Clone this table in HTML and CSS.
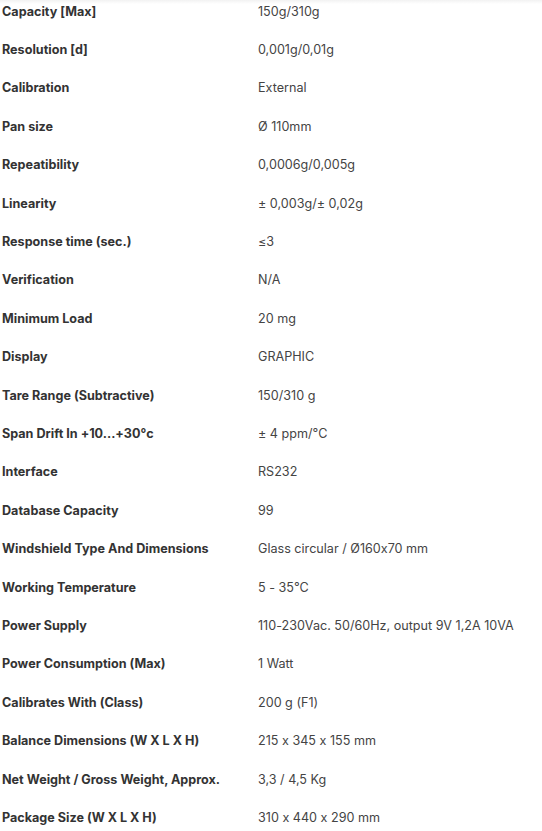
FILE: index.html
```html
<!DOCTYPE html>
<html>
<head>
<meta charset="utf-8">
<link rel="stylesheet" href="styles.css">
</head>
<body>
<div class="topfade"></div>
<table class="specs">
<tbody>
<tr><th>Capacity [Max]</th><td>150g/310g</td></tr>
<tr><th>Resolution [d]</th><td>0,001g/0,01g</td></tr>
<tr><th>Calibration</th><td>External</td></tr>
<tr><th>Pan size</th><td>Ø 110mm</td></tr>
<tr><th>Repeatibility</th><td>0,0006g/0,005g</td></tr>
<tr><th>Linearity</th><td>± 0,003g/± 0,02g</td></tr>
<tr><th>Response time (sec.)</th><td>≤3</td></tr>
<tr><th>Verification</th><td>N/A</td></tr>
<tr><th>Minimum Load</th><td>20 mg</td></tr>
<tr><th>Display</th><td>GRAPHIC</td></tr>
<tr><th>Tare Range (Subtractive)</th><td>150/310 g</td></tr>
<tr><th>Span Drift In +10...+30°c</th><td>± 4 ppm/°C</td></tr>
<tr><th>Interface</th><td>RS232</td></tr>
<tr><th>Database Capacity</th><td>99</td></tr>
<tr><th>Windshield Type And Dimensions</th><td>Glass circular / Ø160x70 mm</td></tr>
<tr><th>Working Temperature</th><td>5 - 35°C</td></tr>
<tr><th>Power Supply</th><td>110-230Vac. 50/60Hz, output 9V 1,2A 10VA</td></tr>
<tr><th>Power Consumption (Max)</th><td>1 Watt</td></tr>
<tr><th>Calibrates With (Class)</th><td>200 g (F1)</td></tr>
<tr><th>Balance Dimensions (W X L X H)</th><td>215 x 345 x 155 mm</td></tr>
<tr><th>Net Weight / Gross Weight, Approx.</th><td>3,3 / 4,5 Kg</td></tr>
<tr><th>Package Size (W X L X H)</th><td>310 x 440 x 290 mm</td></tr>
</tbody>
</table>
</body>
</html>
```
FILE: styles.css
```css
html, body {
  margin: 0;
  padding: 0;
  background: #ffffff;
}
body {
  font-family: Inter, "Open Sans", sans-serif;
  font-size: 12.6px;
  font-feature-settings: "calt" 0;
  overflow: hidden;
}
.topfade {
  position: absolute;
  top: 0;
  left: 0;
  right: 0;
  height: 4px;
  background: linear-gradient(#f2f2f2, rgba(255,255,255,0));
  pointer-events: none;
}
.specs {
  border-collapse: collapse;
  margin-top: -8px;
  width: 542px;
}
.specs th,
.specs td {
  height: 38.4px;
  padding: 0;
  vertical-align: middle;
  text-align: left;
  white-space: nowrap;
}
.specs th {
  width: 256px;
  padding-left: 2px;
  font-weight: 700;
  color: #333333;
}
.specs td {
  font-weight: 400;
  color: #444444;
}
```
